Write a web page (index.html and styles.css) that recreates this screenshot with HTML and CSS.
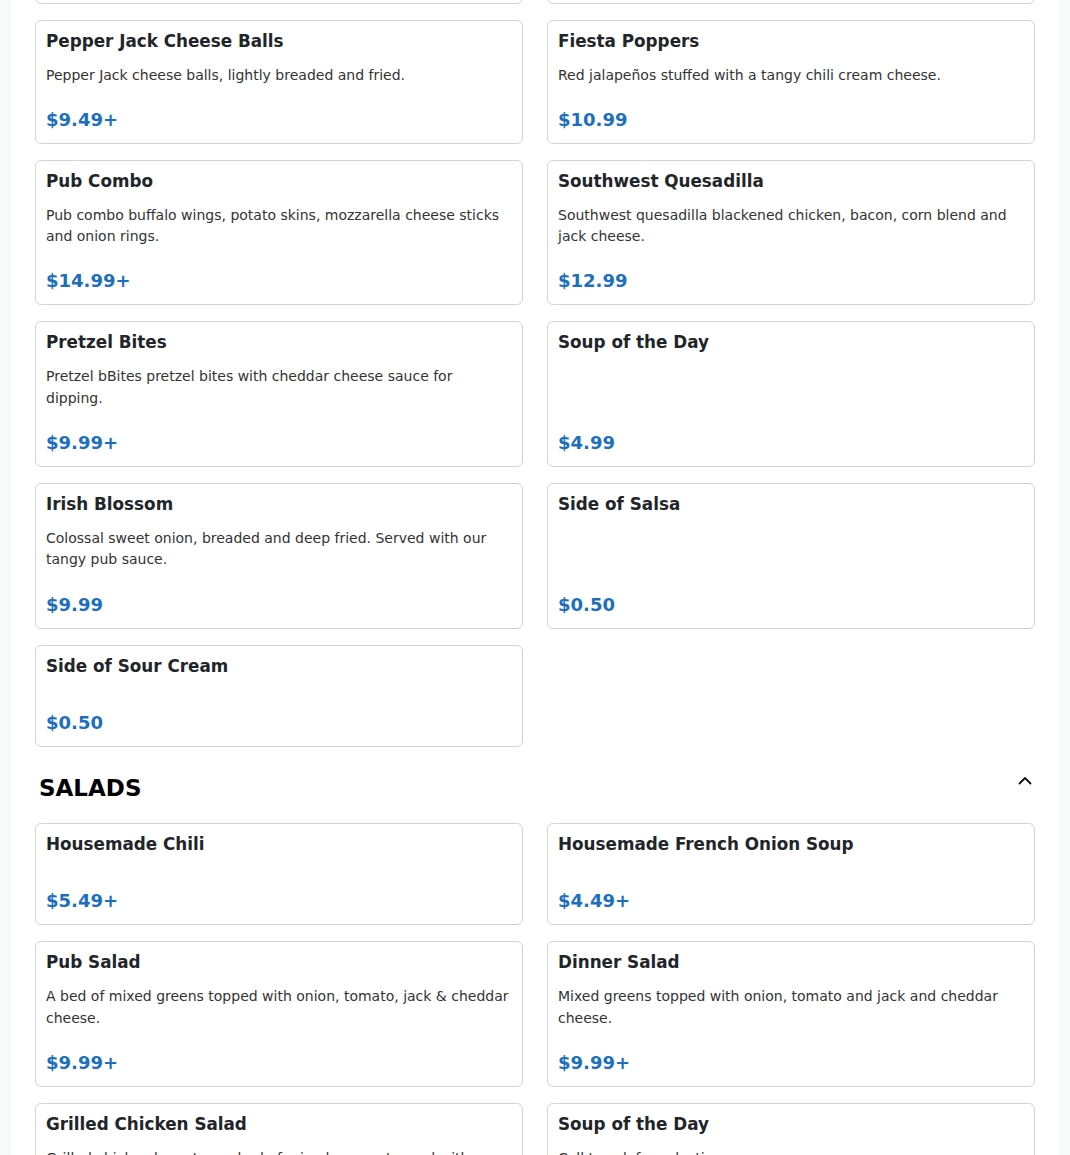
FILE: index.html
```html
<!DOCTYPE html>
<html lang="en">
<head>
<meta charset="utf-8">
<title>Menu</title>
<link rel="stylesheet" href="styles.css">
</head>
<body>
<main class="page">
  <section class="category">
    <div class="grid grid-first">
      <div class="card">
        <h3 class="item-title">Mozzarella Sticks</h3>
        <p class="item-desc">Breaded mozzarella sticks served with marinara.</p>
        <div class="item-price">$9.99</div>
      </div>
      <div class="card">
        <h3 class="item-title">Potato Skins</h3>
        <p class="item-desc">Loaded with cheddar cheese and bacon.</p>
        <div class="item-price">$10.99</div>
      </div>
      <div class="card">
        <h3 class="item-title">Pepper Jack Cheese Balls</h3>
        <p class="item-desc">Pepper Jack cheese balls, lightly breaded and fried.</p>
        <div class="item-price">$9.49+</div>
      </div>
      <div class="card">
        <h3 class="item-title">Fiesta Poppers</h3>
        <p class="item-desc">Red jalapeños stuffed with a tangy chili cream cheese.</p>
        <div class="item-price">$10.99</div>
      </div>
      <div class="card">
        <h3 class="item-title">Pub Combo</h3>
        <p class="item-desc">Pub combo buffalo wings, potato skins, mozzarella cheese sticks and onion rings.</p>
        <div class="item-price">$14.99+</div>
      </div>
      <div class="card">
        <h3 class="item-title">Southwest Quesadilla</h3>
        <p class="item-desc">Southwest quesadilla blackened chicken, bacon, corn blend and jack cheese.</p>
        <div class="item-price">$12.99</div>
      </div>
      <div class="card">
        <h3 class="item-title">Pretzel Bites</h3>
        <p class="item-desc">Pretzel bBites pretzel bites with cheddar cheese sauce for dipping.</p>
        <div class="item-price">$9.99+</div>
      </div>
      <div class="card">
        <h3 class="item-title">Soup of the Day</h3>
        <p class="item-desc"></p>
        <div class="item-price">$4.99</div>
      </div>
      <div class="card">
        <h3 class="item-title">Irish Blossom</h3>
        <p class="item-desc">Colossal sweet onion, breaded and deep fried. Served with our tangy pub sauce.</p>
        <div class="item-price">$9.99</div>
      </div>
      <div class="card">
        <h3 class="item-title">Side of Salsa</h3>
        <p class="item-desc"></p>
        <div class="item-price">$0.50</div>
      </div>
      <div class="card">
        <h3 class="item-title">Side of Sour Cream</h3>
        <p class="item-desc"></p>
        <div class="item-price">$0.50</div>
      </div>
    </div>
  </section>

  <section class="category">
    <div class="category-header">
      <h2 class="category-title">SALADS</h2>
      <svg class="chevron" width="16" height="16" viewBox="0 0 16 16" aria-hidden="true">
        <path d="M2.5 10.5 L8 5 L13.5 10.5" fill="none" stroke="#111" stroke-width="1.8" stroke-linecap="round" stroke-linejoin="round"/>
      </svg>
    </div>
    <div class="grid">
      <div class="card">
        <h3 class="item-title">Housemade Chili</h3>
        <p class="item-desc"></p>
        <div class="item-price">$5.49+</div>
      </div>
      <div class="card">
        <h3 class="item-title">Housemade French Onion Soup</h3>
        <p class="item-desc"></p>
        <div class="item-price">$4.49+</div>
      </div>
      <div class="card">
        <h3 class="item-title">Pub Salad</h3>
        <p class="item-desc">A bed of mixed greens topped with onion, tomato, jack &amp; cheddar cheese.</p>
        <div class="item-price">$9.99+</div>
      </div>
      <div class="card">
        <h3 class="item-title">Dinner Salad</h3>
        <p class="item-desc">Mixed greens topped with onion, tomato and jack and cheddar cheese.</p>
        <div class="item-price">$9.99+</div>
      </div>
      <div class="card">
        <h3 class="item-title">Grilled Chicken Salad</h3>
        <p class="item-desc">Grilled chicken breast on a bed of mixed greens topped with onion, tomato, jack &amp; cheddar cheese.</p>
        <div class="item-price">$12.99+</div>
      </div>
      <div class="card">
        <h3 class="item-title">Soup of the Day</h3>
        <p class="item-desc">Call to ask for selection.</p>
        <div class="item-price">$4.99</div>
      </div>
    </div>
  </section>
</main>
</body>
</html>
```

FILE: styles.css
```css
html, body {
  margin: 0;
  padding: 0;
}

body {
  background: #f8f9fa;
  font-family: "DejaVu Sans", "Noto Sans", sans-serif;
  color: #212529;
  overflow: hidden;
}

.page {
  max-width: 1048px;
  margin: 0 auto;
  background: #ffffff;
  padding: 0 24px 40px;
  box-sizing: border-box;
  min-height: 1155px;
}

.grid {
  display: grid;
  grid-template-columns: 1fr 1fr;
  column-gap: 24px;
  row-gap: 16px;
}

.grid-first {
  margin-top: -119.8px;
}

.card {
  display: flex;
  flex-direction: column;
  border: 1px solid #d3d3d3;
  border-radius: 6px;
  padding: 10px;
  background: #fff;
}

.item-title {
  margin: 0 0 13.6px;
  font-size: 16.8px;
  font-weight: 700;
  line-height: 1.2;
  color: #212529;
}

.item-desc {
  margin: 0 0 19.4px;
  font-size: 14px;
  line-height: 21.7px;
  color: #333333;
}

.item-price {
  margin-top: auto;
  font-size: 18px;
  font-weight: 700;
  line-height: 27px;
  color: #1c6fbf;
}

.category-header {
  display: flex;
  justify-content: space-between;
  align-items: flex-start;
  margin: 28.8px 0 20.2px;
  padding: 0 2px 0 4px;
}

.category-title {
  margin: 0;
  font-size: 23px;
  font-weight: 700;
  line-height: 1.2;
  color: #000;
}

.chevron {
  display: block;
  margin-top: -2px;
}
```
